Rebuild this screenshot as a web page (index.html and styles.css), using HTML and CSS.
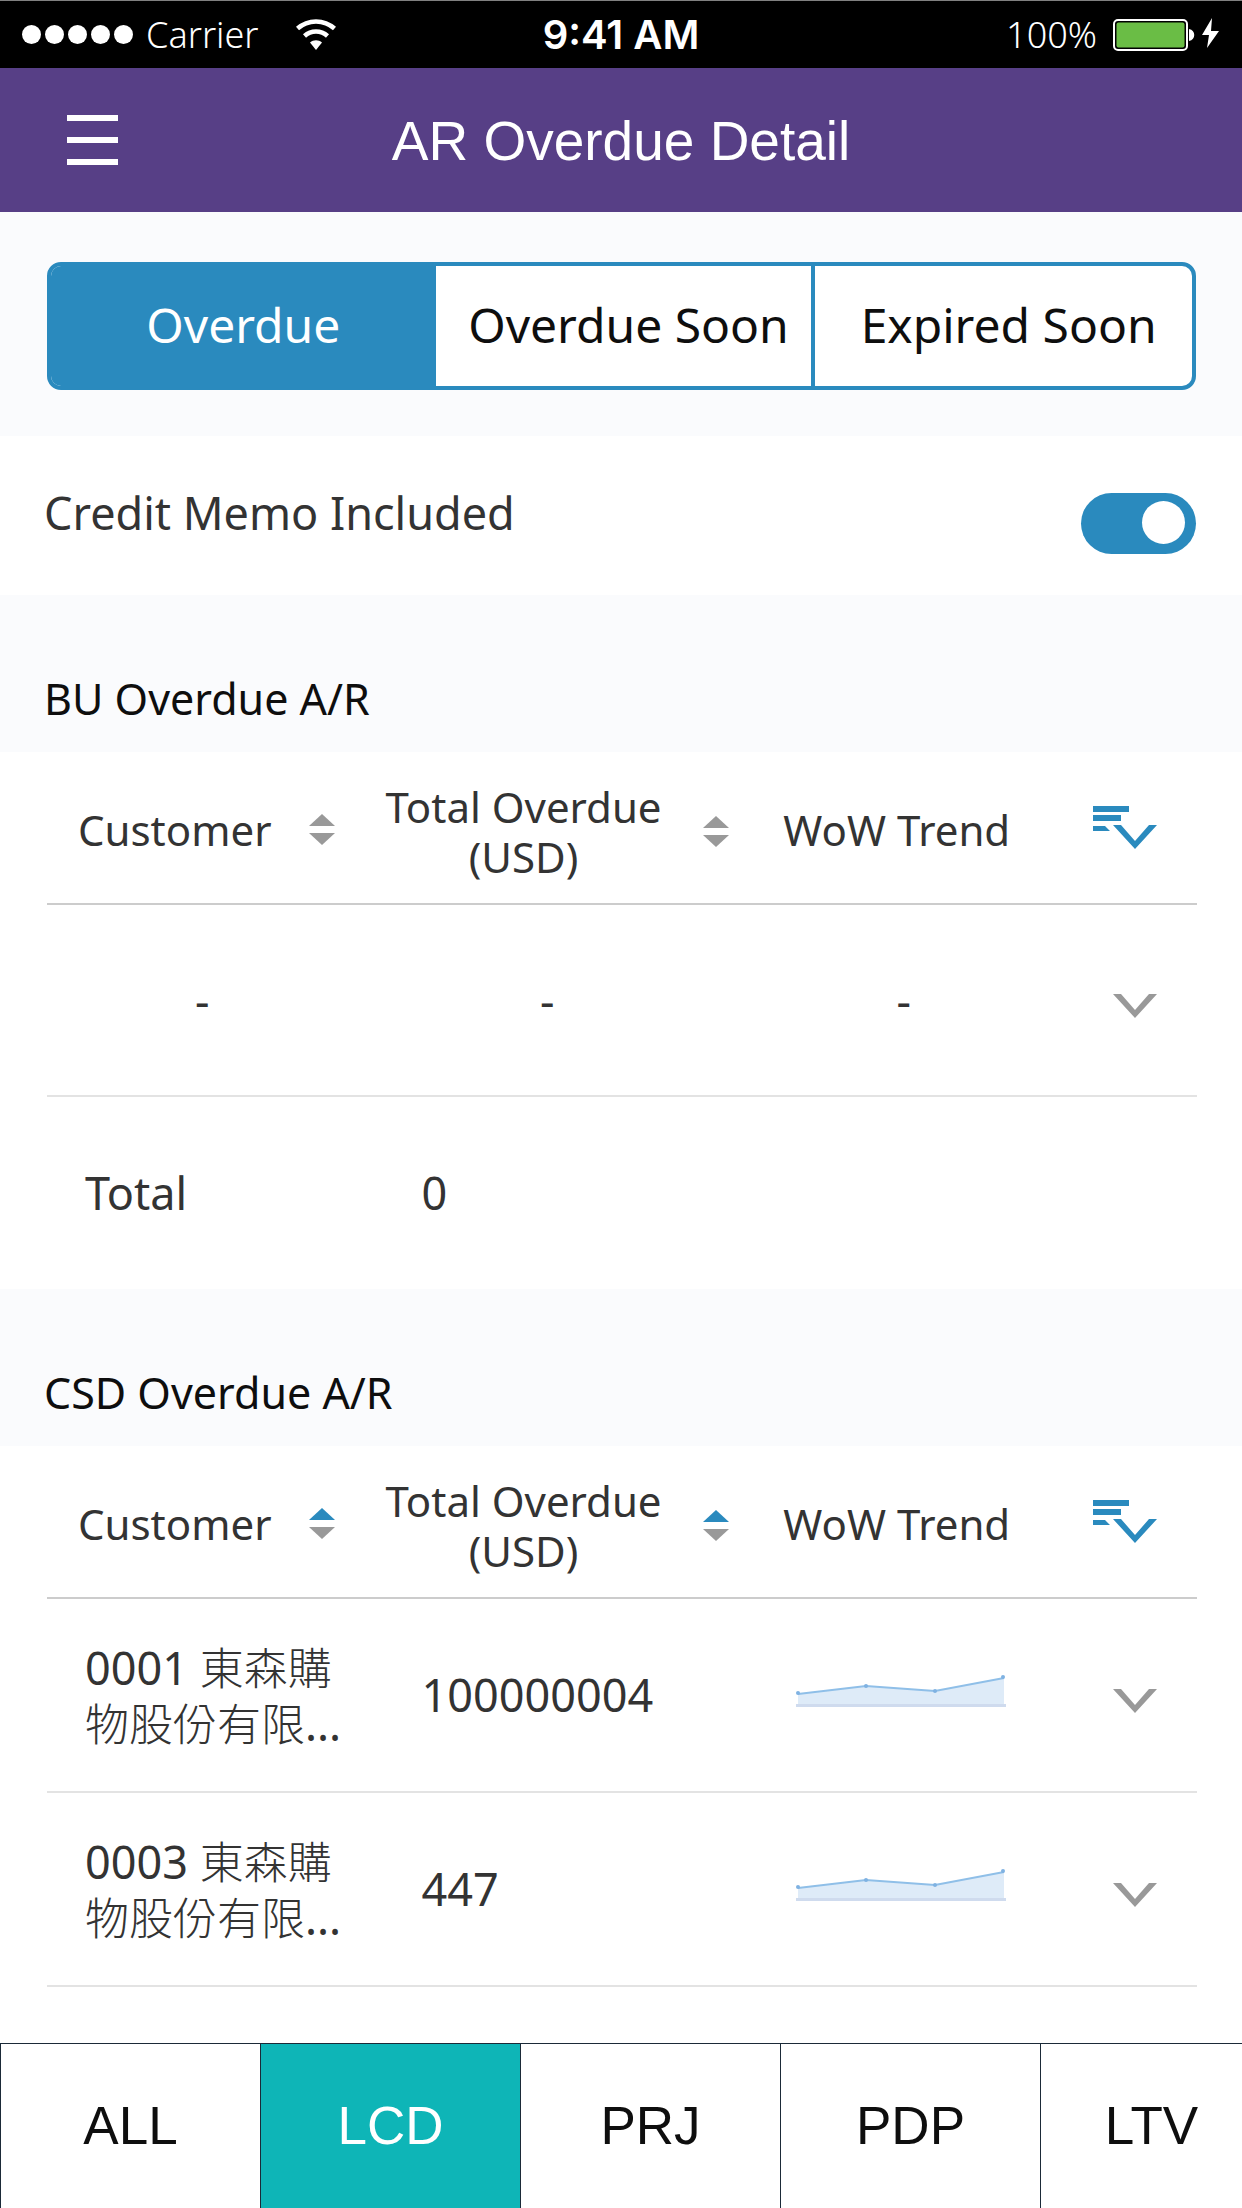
FILE: index.html
```html
<!DOCTYPE html>
<html lang="en">
<head>
<meta charset="utf-8">
<meta name="viewport" content="width=device-width, initial-scale=1">
<title>AR Overdue Detail</title>
<link rel="stylesheet" href="styles.css">
</head>
<body>
<svg class="defs" width="0" height="0" aria-hidden="true">
  <symbol id="sort" viewBox="0 0 26 31">
    <path class="up" d="M13 0 26 12H0Z"/>
    <path class="down" d="M0 19H26L13 31Z"/>
  </symbol>
  <symbol id="chevron" viewBox="0 0 44 24">
    <path d="M0 0H8L22 16 36 0H44L22 24Z"/>
  </symbol>
  <symbol id="filter" viewBox="0 0 64 43">
    <path d="M0 0H36V6H0ZM0 9H28V15H0ZM0 20H12L17 25H0ZM20 19H28L42 35 56 19H64L42 43Z"/>
  </symbol>
  <symbol id="spark" viewBox="0 0 210 32">
    <path d="M2 19 70 11 139 16 208 3V30H2Z" fill="#deebf8"/>
    <path d="M0 30.500H210" stroke="#cfdbee" stroke-width="3"/>
    <path d="M2 19 70 11 139 16 208 3" fill="none" stroke="#8fbfe8" stroke-width="2"/>
    <g fill="#7fb2e2"><circle cx="2" cy="18" r="2"/><circle cx="70" cy="11" r="2"/><circle cx="139" cy="16" r="2"/><circle cx="207" cy="2" r="2"/></g>
  </symbol>
</svg>

<div class="app">
  <div class="status">
    <div class="status-left">
      <svg width="111" height="19" viewBox="0 0 111 19" fill="#fff" aria-hidden="true"><circle cx="9.500" cy="9.500" r="9.500"/><circle cx="32.500" cy="9.500" r="9.500"/><circle cx="55.500" cy="9.500" r="9.500"/><circle cx="78.500" cy="9.500" r="9.500"/><circle cx="101.500" cy="9.500" r="9.500"/></svg>
      <span class="carrier">Carrier</span>
      <svg width="40" height="31" viewBox="0 0 40 31" fill="none" stroke="#fff" stroke-width="4.500" aria-hidden="true"><path d="M1.500 9.500C12 0 28 0 38.500 9.500"/><path d="M8.500 17C15 11 25 11 31.500 17"/><path d="M14 23.500C17.500 20.500 22.500 20.500 26 23.500L20 31Z" fill="#fff" stroke="none"/></svg>
    </div>
    <span class="clock">9:41 AM</span>
    <div class="status-right">
      <span>100%</span>
      <svg width="107" height="34" viewBox="0 0 107 34" aria-hidden="true"><rect x="1" y="2" width="73" height="30" rx="4" fill="none" stroke="#fff" stroke-width="2"/><rect x="3.500" y="4.500" width="68" height="25" rx="2" fill="#6abd45"/><path d="M76 11C83 12 83 22 76 23Z" fill="#fff"/><path d="M99 0 89 17H96L94 30 106 13H98Z" fill="#fff"/></svg>
    </div>
  </div>

  <header class="header">
    <button class="menu" aria-label="Menu"><svg width="51" height="50" viewBox="0 0 51 50" fill="#fff"><path d="M0 0H51V6H0ZM0 22H51V28H0ZM0 44H51V50H0Z"/></svg></button>
    <h1 class="title">AR Overdue Detail</h1>
  </header>

  <main>
    <div class="filters">
      <div class="segments">
        <button class="segment active" aria-pressed="true">Overdue</button>
        <button class="segment" aria-pressed="false">Overdue Soon</button>
        <button class="segment" aria-pressed="false">Expired Soon</button>
      </div>
    </div>

    <div class="memo">
      <label for="memo">Credit Memo Included</label>
      <input class="toggle" id="memo" type="checkbox" role="switch" checked>
    </div>

    <h2 class="section-title">BU Overdue A/R</h2>
    <table class="grid">
      <thead>
        <tr>
          <th class="col-name"><button class="sort">Customer<svg width="26" height="31"><use href="#sort"/></svg></button></th>
          <th class="col-total"><button class="sort"><span>Total Overdue (USD)</span><svg width="26" height="31"><use href="#sort"/></svg></button></th>
          <th class="col-trend">WoW Trend</th>
          <th class="col-more"><button class="icon blue" aria-label="Expand all"><svg width="64" height="43"><use href="#filter"/></svg></button></th>
        </tr>
      </thead>
      <tbody>
        <tr>
          <td>-</td>
          <td>-</td>
          <td>-</td>
          <td class="more"><button class="icon" aria-label="Expand"><svg width="44" height="24"><use href="#chevron"/></svg></button></td>
        </tr>
        <tr class="total">
          <td class="name">Total</td>
          <td class="amount">0</td>
          <td></td>
          <td></td>
        </tr>
      </tbody>
    </table>

    <h2 class="section-title">CSD Overdue A/R</h2>
    <table class="grid sorted">
      <thead>
        <tr>
          <th class="col-name"><button class="sort">Customer<svg width="26" height="31"><use href="#sort"/></svg></button></th>
          <th class="col-total"><button class="sort"><span>Total Overdue (USD)</span><svg width="26" height="31"><use href="#sort"/></svg></button></th>
          <th class="col-trend">WoW Trend</th>
          <th class="col-more"><button class="icon blue" aria-label="Expand all"><svg width="64" height="43"><use href="#filter"/></svg></button></th>
        </tr>
      </thead>
      <tbody>
        <tr>
          <td class="name">0001 <span lang="zh-Hant">東森購<br>物股份有限</span>...</td>
          <td class="amount">100000004</td>
          <td class="trend"><svg width="210" height="32" role="img" aria-label="Trend"><use href="#spark"/></svg></td>
          <td class="more"><button class="icon" aria-label="Expand"><svg width="44" height="24"><use href="#chevron"/></svg></button></td>
        </tr>
        <tr>
          <td class="name">0003 <span lang="zh-Hant">東森購<br>物股份有限</span>...</td>
          <td class="amount">447</td>
          <td class="trend"><svg width="210" height="32" role="img" aria-label="Trend"><use href="#spark"/></svg></td>
          <td class="more"><button class="icon" aria-label="Expand"><svg width="44" height="24"><use href="#chevron"/></svg></button></td>
        </tr>
      </tbody>
    </table>
  </main>

  <nav class="tabs">
    <a class="tab" href="#all">ALL</a>
    <a class="tab current" href="#lcd" aria-current="page">LCD</a>
    <a class="tab" href="#prj">PRJ</a>
    <a class="tab" href="#pdp">PDP</a>
    <a class="tab" href="#ltv">LTV</a>
  </nav>
</div>
</body>
</html>
```
FILE: styles.css
```css
* { box-sizing: border-box; }

:root {
  --blue: #2a8abe;
  --purple: #573f86;
  --teal: #0eb5b7;
  --page: #fafbfd;
  --ink: #0e0e0e;
  --text: #333;
  --grey: #999;
  --up: var(--grey);
}

body {
  margin: 0;
  background: #fff;
  color: var(--text);
  font: 400 45px/54px "Noto Sans", "Noto Sans CJK TC", sans-serif;
}

:lang(zh) {
  font-family: "Noto Sans CJK TC", sans-serif;
  font-size: 44px;
  font-weight: 300;
}

button {
  margin: 0;
  padding: 0;
  border: 0;
  background: none;
  color: inherit;
  font: inherit;
  cursor: pointer;
}

svg { display: block; flex: none; }
.defs { position: absolute; }

.app {
  display: flex;
  flex-direction: column;
  min-height: 100vh;
}

/* Status bar */
.status {
  display: grid;
  grid-template-columns: 1fr auto 1fr;
  align-items: center;
  height: 68px;
  padding: 0 22px;
  border-top: 1px solid #808080;
  background: #000;
  color: #fff;
  font-size: 36px;
  font-weight: 300;
  line-height: 66px;
}
.status-left, .status-right { display: flex; align-items: center; }
.status-left { gap: 13px; }
.carrier { margin-right: 24px; }
.status-right { justify-content: flex-end; gap: 16px; }
.clock { font: 600 40px/66px Inter, sans-serif; }

/* Title bar */
.header {
  display: grid;
  grid-template-columns: 1fr auto 1fr;
  align-items: center;
  height: 144px;
  padding: 0 67px;
  background: var(--purple);
  color: #fff;
}
.menu { justify-self: start; }
.title {
  margin: 0;
  padding-top: 2px;
  font: 400 55px/64px "Liberation Sans", Arial, sans-serif;
}

/* Segmented control */
.filters {
  padding: 50px 46px 46px 47px;
  background: var(--page);
}
.segments {
  display: grid;
  grid-template-columns: 387fr 382fr 379fr;
  height: 128px;
  overflow: hidden;
  border: 4px solid var(--blue);
  border-radius: 14px;
  background: #fff;
  color: var(--ink);
  font-size: 48px;
}
.segment { padding-bottom: 3px; }
.segment + .segment { padding-left: 10px; }
.segment:nth-child(2) { border-right: 4px solid var(--blue); }
.segment.active { background: var(--blue); color: #fff; }

/* Credit memo switch */
.memo {
  display: flex;
  justify-content: space-between;
  align-items: flex-start;
  padding: 57px 46px 41px 44px;
  line-height: 40px;
}
.toggle {
  appearance: none;
  width: 115px;
  height: 61px;
  margin: 0;
  padding: 8px 11px;
  border-radius: 31px;
  background: var(--grey);
}
.toggle::before {
  content: "";
  display: block;
  width: 43px;
  height: 43px;
  border-radius: 50%;
  background: #fff;
}
.toggle:checked { background: var(--blue); }
.toggle:checked::before { margin-left: auto; }

/* Sections */
.section-title {
  margin: 0;
  padding: 74px 44px 23px;
  background: var(--page);
  color: var(--ink);
  font-size: 43px;
  font-weight: 400;
  line-height: 60px;
}

.grid {
  width: calc(100% - 92px);
  margin: 0 45px 0 47px;
  border-collapse: separate;
  border-spacing: 0;
  table-layout: fixed;
}
.grid.sorted { --up: var(--blue); }
.grid th {
  height: 153px;
  padding: 4px 0 0;
  border-bottom: 2px solid #ccc;
  font-size: 42px;
  font-weight: 400;
  line-height: 50px;
}
.grid td {
  height: 192px;
  padding: 0;
  border-bottom: 2px solid #e3e3e3;
  text-align: center;
}
.grid.sorted td { height: 194px; }
.grid .total td { border-bottom: 0; }
.grid .col-name { width: 27%; padding-left: 31px; padding-right: 23px; }
.grid .col-total { width: 33%; padding-top: 8px; padding-left: 21px; padding-right: 8px; }
.grid .col-trend { width: 29%; padding-right: 14px; }
.grid .col-more { width: 11%; padding-top: 0; padding-right: 40px; }
.grid .name { padding-left: 38px; text-align: left; white-space: nowrap; }
.grid .amount { padding-left: 64px; text-align: left; }
.grid .more { padding: 12px 40px 0 0; }
.grid .trend { padding: 0 6px 8px 0; }
.trend svg { margin: 0 auto; }

.sort {
  display: flex;
  justify-content: space-between;
  align-items: center;
  width: 100%;
}
.sort span { width: 290px; }
.up { fill: var(--up); }
.down { fill: var(--grey); }

.icon { display: block; margin-left: auto; fill: var(--grey); }
.icon.blue { fill: var(--blue); }

/* Business unit tabs */
.tabs {
  display: flex;
  height: 165px;
  margin-top: auto;
  overflow: hidden;
  border-top: 1px solid #1b2a38;
}
.tab {
  display: flex;
  flex: 1 0 260px;
  justify-content: center;
  align-items: center;
  border-left: 1px solid #1b2a38;
  color: var(--ink);
  font: 400 53px/60px "Liberation Sans", Arial, sans-serif;
  text-decoration: none;
}
.tab:last-child { flex-basis: 222px; }
.tab.current { background: var(--teal); color: #fff; }
```
